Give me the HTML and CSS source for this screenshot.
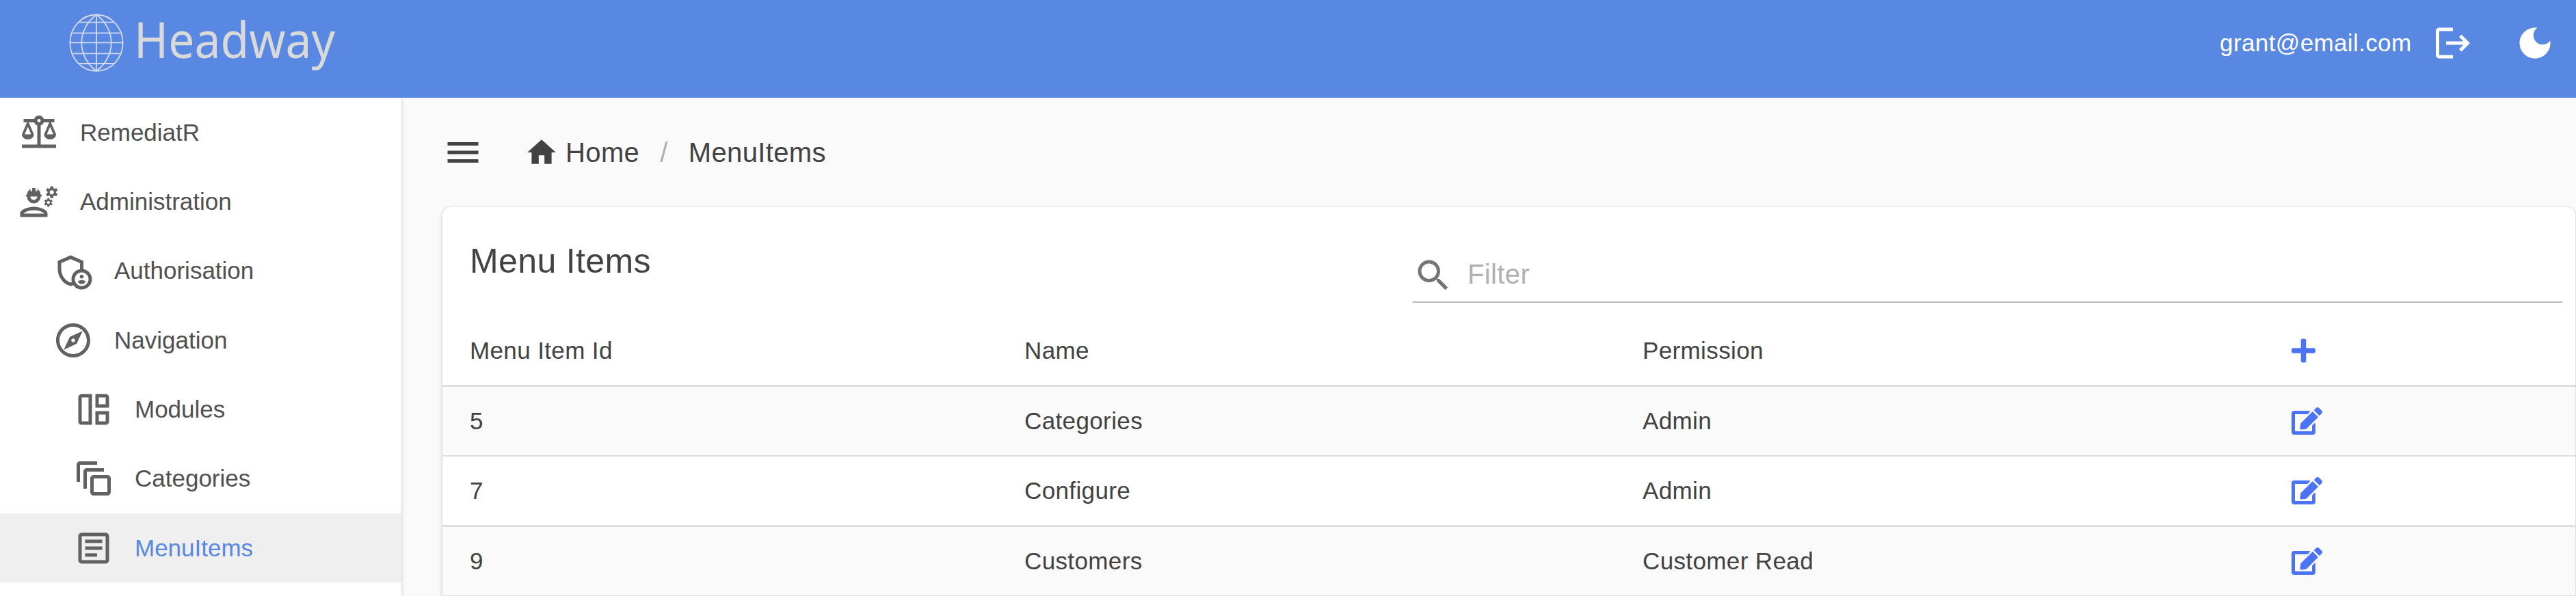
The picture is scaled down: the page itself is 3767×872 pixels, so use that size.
FILE: index.html
```html
<!DOCTYPE html>
<html lang="en">
<head>
<meta charset="utf-8">
<title>Headway</title>
<link rel="stylesheet" href="styles.css">
</head>
<body>
<div class="app">
  <header class="appbar">
    <svg class="logo" viewBox="0 -9 400 143" role="img" aria-label="Headway">
      <g class="globe">
        <ellipse cx="41" cy="53.7" rx="38.6" ry="41.2"/>
        <path d="M41 12.500V95M2.400 53.300H79.600M15 23.700H67M6.500 39.300H75.500M6.500 69.300H75.500M15 84H67"/>
        <path d="M41 12.500C28 22 19.300 37 19.300 53.700S28 85.500 41 95M41 12.500C54 22 62.700 37 62.700 53.700S54 85.500 41 95"/>
      </g>
      <text class="wordmark" x="96" y="76" textLength="294" lengthAdjust="spacingAndGlyphs">Headway</text>
    </svg>
    <div class="account">
      <span class="email">grant@email.com</span>
      <svg class="icon logout" viewBox="0 0 24 24"><path d="M17 7l-1.410 1.410L18.170 11H8v2h10.170l-2.580 2.580L17 17l5-5zM4 5h8V3H4c-1.100 0-2 .9-2 2v14c0 1.100.9 2 2 2h8v-2H4V5z"/></svg>
      <svg class="icon" viewBox="0 0 24 24"><path d="M12 3c-4.970 0-9 4.030-9 9s4.030 9 9 9 9-4.030 9-9c0-.46-.04-.92-.1-1.360-.98 1.370-2.580 2.260-4.400 2.260-2.980 0-5.400-2.420-5.400-5.400 0-1.810.89-3.420 2.260-4.400-.44-.06-.9-.1-1.360-.1z"/></svg>
    </div>
  </header>
  <nav class="drawer">
    <a class="nav-link"><svg class="icon" viewBox="0 0 24 24"><path d="M13,7.830c0.850-0.300,1.530-0.980,1.830-1.830H18l-3,7c0,1.660,1.570,3,3.500,3s3.500-1.340,3.500-3l-3-7h2V4h-6.170C14.420,2.830,13.310,2,12,2S9.580,2.830,9.170,4L3,4v2h2l-3,7c0,1.660,1.570,3,3.500,3S9,14.660,9,13L6,6h3.170c0.300,0.850,0.980,1.530,1.830,1.830V19H2v2h20v-2h-9V7.830z M20.370,13h-3.740l1.870-4.360L20.370,13z M7.370,13H3.630L5.500,8.640L7.370,13z M12,6c-0.550,0-1-0.450-1-1c0-0.550,0.450-1,1-1s1,0.450,1,1C13,5.550,12.550,6,12,6z"/></svg>RemediatR</a>
    <a class="nav-link"><svg class="icon" viewBox="0 0 24 24"><path d="M9 15c-2.670 0-8 1.340-8 4v2h16v-2c0-2.660-5.330-4-8-4zm-6 4c.22-.72 3.310-2 6-2 2.700 0 5.800 1.290 6 2H3zM4.740 9H5c0 2.210 1.790 4 4 4s4-1.790 4-4h.26c.27 0 .49-.22.49-.49v-.02c0-.27-.22-.49-.49-.49H13c0-1.480-.81-2.750-2-3.450v.95c0 .28-.22.5-.5.5s-.5-.22-.5-.5V4.140C9.680 4.060 9.350 4 9 4s-.68.06-1 .14V5.500c0 .28-.22.5-.5.5S7 5.780 7 5.500v-.95C5.810 5.250 5 6.520 5 8h-.26c-.27 0-.49.22-.49.49v.03c0 .26.22.48.49.48zM11 9c0 1.100-.9 2-2 2s-2-.9-2-2h4zM21.980 6.230l.93-.83-.75-1.300-1.190.39c-.14-.11-.3-.2-.47-.27L20.250 3h-1.500l-.25 1.220c-.17.07-.33.16-.48.27l-1.180-.39-.75 1.300.93.83c-.02.17-.02.35 0 .52l-.93.85.75 1.300 1.200-.38c.13.1.28.18.43.25l.28 1.230h1.500l.27-1.220c.16-.07.3-.15.44-.25l1.190.38.75-1.300-.93-.85c.03-.19.02-.36.01-.53zM19.500 7.750c-.69 0-1.250-.56-1.250-1.250s.56-1.250 1.250-1.250 1.250.56 1.250 1.250-.56 1.250-1.250 1.250zM19.400 10.790l-.85.28c-.1-.08-.21-.14-.33-.19l-.18-.88h-1.070l-.18.87c-.12.05-.24.12-.34.19l-.84-.28-.54.93.66.59c-.01.13-.01.25 0 .37l-.66.61.54.93.86-.27c.1.07.2.13.31.18l.18.88h1.070l.19-.87c.11-.05.22-.11.32-.18l.85.27.54-.93-.66-.61c.01-.13.01-.25 0-.37l.66-.59-.55-.93zm-1.900 2.600c-.49 0-.89-.4-.89-.89s.4-.89.89-.89.89.4.89.89-.4.89-.89.89z"/></svg>Administration</a>
    <a class="nav-link level-1"><svg class="icon" viewBox="0 0 24 24"><path d="M18,11.090V6.270L10.500,3L3,6.270v4.910c0,4.540,3.200,8.790,7.500,9.820c0.550-0.130,1.080-0.320,1.600-0.550C13.180,21.990,14.970,23,17,23c3.310,0,6-2.690,6-6C23,14.030,20.840,11.570,18,11.090z M11,17c0,0.560,0.080,1.110,0.230,1.620c-0.240,0.110-0.480,0.220-0.730,0.300c-3.170-1-5.500-4.240-5.500-7.740v-3.600l5.500-2.400l5.500,2.400v3.510C13.160,11.570,11,14.030,11,17z M17,21c-2.210,0-4-1.790-4-4c0-2.210,1.790-4,4-4s4,1.790,4,4C21,19.210,19.210,21,17,21z"/><circle cx="17" cy="15.500" r="1.120"/><path d="M17 17.500c-.73 0-2.190.36-2.240 1.080.5.710 1.320 1.170 2.240 1.170s1.740-.46 2.240-1.170c-.05-.72-1.510-1.080-2.240-1.080z"/></svg>Authorisation</a>
    <a class="nav-link level-1"><svg class="icon" viewBox="0 0 24 24"><path d="M12 2C6.480 2 2 6.480 2 12s4.480 10 10 10 10-4.480 10-10S17.520 2 12 2zm0 18c-4.410 0-8-3.590-8-8s3.590-8 8-8 8 3.590 8 8-3.590 8-8 8zm-5.500-2.500l7.510-3.490L17.500 6.500 9.990 9.990 6.500 17.500zm5.500-6.600c.61 0 1.100.49 1.100 1.100s-.49 1.100-1.100 1.100-1.100-.49-1.100-1.100.49-1.100 1.100-1.100z"/></svg>Navigation</a>
    <a class="nav-link level-2"><svg class="icon" viewBox="0 0 24 24"><path fill-rule="evenodd" d="M11 21H5c-1.100 0-2-.9-2-2V5c0-1.100.9-2 2-2h6zM9 5H5v14h4zM13 3h6c1.100 0 2 .9 2 2v6h-8zM15 5v4h4V5zM13 13h8v6c0 1.100-.9 2-2 2h-6zM15 15v4h4v-4z"/></svg>Modules</a>
    <a class="nav-link level-2"><svg class="icon" viewBox="0 0 24 24"><path d="M14 2H4c-1.110 0-2 .9-2 2v10h2V4h10V2zm4 4H8c-1.110 0-2 .9-2 2v10h2V8h10V6zm2 4h-8c-1.110 0-2 .9-2 2v8c0 1.100.89 2 2 2h8c1.100 0 2-.9 2-2v-8c0-1.100-.9-2-2-2zm0 10h-8v-8h8v8z"/></svg>Categories</a>
    <a class="nav-link level-2 active"><svg class="icon" viewBox="0 0 24 24"><path d="M19 5v14H5V5h14m0-2H5c-1.100 0-2 .9-2 2v14c0 1.100.9 2 2 2h14c1.100 0 2-.9 2-2V5c0-1.100-.9-2-2-2zM14 17H7v-2h7v2zm3-4H7v-2h10v2zm0-4H7V7h10v2z"/></svg>MenuItems</a>
  </nav>
  <main class="content">
    <div class="topline">
      <svg class="icon" viewBox="0 0 24 24"><path d="M3 18h18v-2H3v2zm0-5h18v-2H3v2zm0-7v2h18V6H3z"/></svg>
      <div class="breadcrumbs">
        <svg class="icon icon-small" viewBox="0 0 24 24"><path d="M10 20v-6h4v6h5v-8h3L12 3 2 12h3v8z"/></svg>
        <span class="crumb">Home</span>
        <span class="separator">/</span>
        <span class="crumb">MenuItems</span>
      </div>
    </div>
    <section class="card">
      <div class="toolbar">
        <h1 class="title">Menu Items</h1>
        <div class="filter">
          <svg class="icon" viewBox="0 0 24 24"><path d="M15.500 14h-.79l-.28-.27C15.410 12.590 16 11.110 16 9.500 16 5.910 13.090 3 9.500 3S3 5.910 3 9.500 5.910 16 9.500 16c1.610 0 3.090-.59 4.230-1.570l.27.28v.79l5 4.990L20.490 19l-4.990-5zm-6 0C7.010 14 5 11.990 5 9.500S7.010 5 9.500 5 14 7.010 14 9.500 11.990 14 9.500 14z"/></svg>
          <span class="placeholder">Filter</span>
        </div>
      </div>
      <table class="grid">
        <colgroup><col class="col-id"><col class="col-name"><col class="col-permission"><col></colgroup>
        <thead>
          <tr><th>Menu Item Id</th><th>Name</th><th>Permission</th><th><svg class="action add" viewBox="0 0 448 512"><path d="M416 208H272V64c0-17.670-14.330-32-32-32h-32c-17.670 0-32 14.330-32 32v144H32c-17.670 0-32 14.330-32 32v32c0 17.670 14.330 32 32 32h144v144c0 17.670 14.330 32 32 32h32c17.670 0 32-14.330 32-32V304h144c17.670 0 32-14.330 32-32v-32c0-17.670-14.330-32-32-32z"/></svg></th></tr>
        </thead>
        <tbody>
          <tr><td>5</td><td>Categories</td><td>Admin</td><td><svg class="action" viewBox="0 0 576 512"><path id="edit" d="M402.600 83.200l90.200 90.200c3.800 3.800 3.800 10 0 13.800L274.400 405.600l-92.800 10.300c-12.400 1.400-22.900-9.100-21.500-21.500l10.300-92.800L388.800 83.200c3.800-3.800 10-3.800 13.800 0zm162-22.900l-48.800-48.800c-15.200-15.200-39.900-15.200-55.200 0l-35.400 35.400c-3.800 3.800-3.800 10 0 13.800l90.200 90.200c3.800 3.800 10 3.800 13.800 0l35.400-35.400c15.200-15.300 15.200-40 0-55.200zM384 346.200V448H64V128h229.800c3.200 0 6.200-1.300 8.500-3.500l40-40c7.600-7.600 2.200-20.500-8.500-20.500H48C21.500 64 0 85.500 0 112v352c0 26.500 21.500 48 48 48h352c26.500 0 48-21.500 48-48V306.200c0-10.700-12.900-16-20.500-8.500l-40 40c-2.200 2.300-3.500 5.300-3.500 8.500z"/></svg></td></tr>
          <tr><td>7</td><td>Configure</td><td>Admin</td><td><svg class="action" viewBox="0 0 576 512"><use href="#edit"/></svg></td></tr>
          <tr><td>9</td><td>Customers</td><td>Customer Read</td><td><svg class="action" viewBox="0 0 576 512"><use href="#edit"/></svg></td></tr>
        </tbody>
      </table>
    </section>
  </main>
</div>
</body>
</html>
```
FILE: styles.css
```css
* { box-sizing: border-box; }

body {
  margin: 0;
  overflow: hidden;
  background: #fafafa;
  color: #424242;
  font-family: "Liberation Sans", Arial, sans-serif;
  font-size: 35px;
  letter-spacing: 0.375px;
}

.app {
  display: grid;
  grid-template: 143px 729px / 587px 1fr;
  width: 3767px;
  height: 872px;
}

.icon {
  flex: none;
  display: block;
  width: 60px;
  height: 60px;
  fill: currentColor;
}

.icon-small { width: 50px; height: 50px; }

/* App bar */
.appbar {
  grid-column: 1 / -1;
  z-index: 1;
  display: flex;
  justify-content: space-between;
  background: #5988e2;
  color: #fff;
}

.logo {
  width: 400px;
  height: 143px;
  margin-left: 100px;
  overflow: visible;
}

.globe { fill: none; stroke: #d3daea; stroke-width: 1.8; }

.wordmark {
  fill: #d9d9d9;
  font: 73.8px "Noto Sans", "Open Sans", sans-serif;
  letter-spacing: 0;
}

.account {
  display: flex;
  align-items: center;
  height: 126px;
  padding-right: 30.5px;
}

.logout { margin: 0 60px 0 30px; }

/* Drawer */
.drawer {
  background: #fff;
  box-shadow: 0 2px 6px rgba(0, 0, 0, 0.2);
}

.nav-link {
  display: flex;
  align-items: center;
  gap: 30px;
  height: 101.33px;
  padding-left: 27px;
  color: #505050;
  letter-spacing: 0;
}

.nav-link .icon { color: #616161; }
.level-1 { padding-left: 77px; }
.level-2 { padding-left: 107px; }
.active { background: #efefef; color: #5988e2; }

/* Content */
.content {
  display: flex;
  flex-direction: column;
  padding-left: 60px;
}

.topline {
  flex: none;
  display: flex;
  align-items: center;
  gap: 60px;
  height: 160px;
}

.breadcrumbs {
  display: flex;
  align-items: center;
  font-size: 40px;
}

.breadcrumbs .icon { margin-right: 10px; }
.separator { padding: 0 30px; color: #b0b0b0; }

.card {
  flex: none;
  width: 3119px;
  border-radius: 12px 12px 0 0;
  background: #fff;
  box-shadow: 0 2px 6px rgba(0, 0, 0, 0.2), 0 0 1px rgba(0, 0, 0, 0.18);
}

.toolbar {
  display: flex;
  height: 160px;
  padding: 0 19px 0 40px;
}

.title {
  width: 1379px;
  margin: 51px 0 0;
  font-size: 50px;
  font-weight: 400;
  line-height: 57px;
}

.filter {
  flex: 1;
  display: flex;
  align-items: center;
  height: 80px;
  margin-top: 60px;
  padding-top: 2px;
  border-bottom: 2px solid #b8b8b8;
}

.filter .icon { color: #757575; }

.placeholder {
  margin: 0 0 3px 20px;
  color: #b0b0b0;
  font-size: 40px;
}

/* Table */
.grid {
  width: 100%;
  table-layout: fixed;
  border-collapse: separate;
  border-spacing: 0;
}

.col-id { width: 811px; }
.col-name { width: 904px; }
.col-permission { width: 949px; }

.grid th,
.grid td {
  height: 103px;
  padding: 0 0 0 40px;
  border-bottom: 3px solid #e0e0e0;
  font-weight: 400;
  text-align: left;
  vertical-align: middle;
}

.grid tbody tr:nth-child(odd) td {
  height: 102px;
  border-bottom-width: 2px;
  background: #fafafa;
}

.action {
  display: block;
  width: 45px;
  height: 40px;
  fill: #4c72f5;
}

.add { width: 35px; }
```
